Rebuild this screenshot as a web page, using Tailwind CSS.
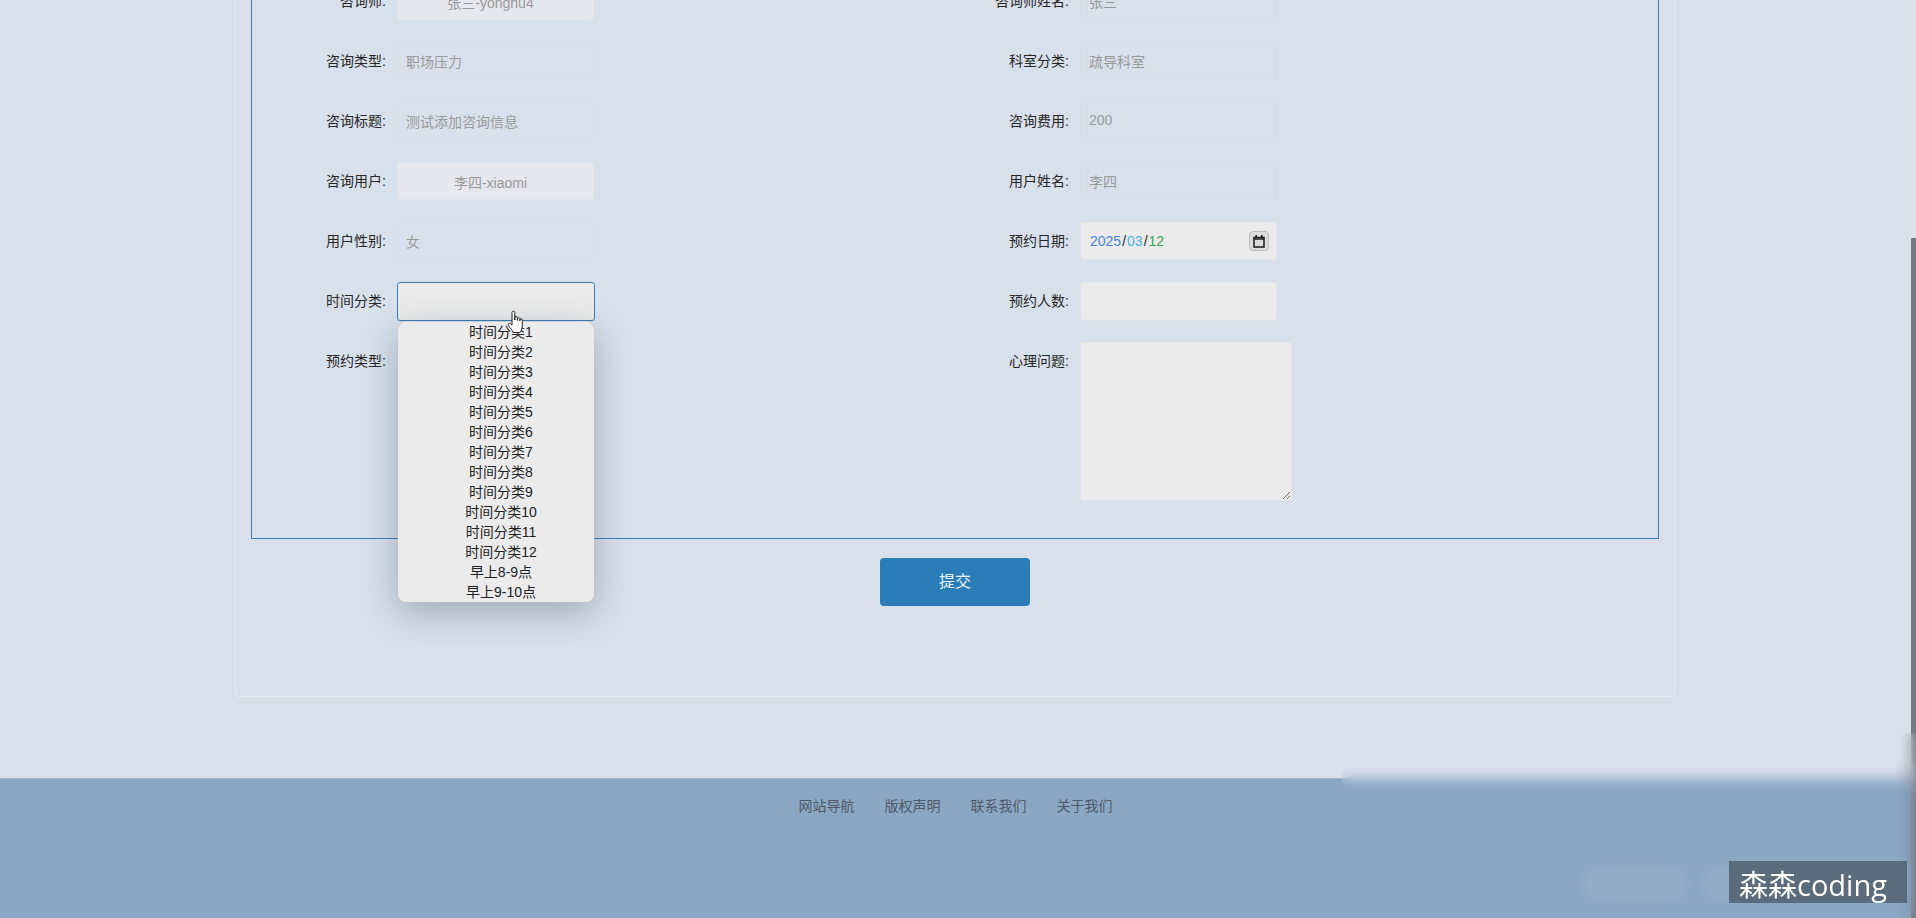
<!DOCTYPE html>
<html lang="zh-CN">

<head>
    <meta charset="UTF-8">
    <meta name="viewport" content="width=device-width, initial-scale=1.0">
    <title>预约</title>
    <script src="https://cdn.jsdelivr.net/npm/@tailwindcss/browser@4"></script>
</head>

<body class="bg-[#d9e0ec] font-['Liberation_Sans','Noto_Sans_CJK_SC',sans-serif] text-[14px] text-[#262626]">
    <div class="relative flex h-[918px] w-[1916px] overflow-hidden">
        <div class="flex h-full w-[1911px] flex-col">
            <!-- Main Content -->
            <main class="h-[778px] overflow-hidden pl-[235px]">
                <div class="-mt-[18px] h-[715px] w-[1440px] rounded-b-[4px] border-x border-b border-[#e6eaf1] px-[15px]">
                    <!-- Form box -->
                    <form class="grid h-[557px] w-[1408px] grid-cols-[683px_1fr] content-start gap-y-[22px] border-x border-b border-[#3a80b5] bg-[#d8e0eb]">
                        <div class="flex items-center gap-[11px]">
                            <label class="w-[134px] text-right">咨询师:</label>
                            <input readonly value="张三-yonghu4" class="h-[38px] w-[197px] rounded-[3px] border border-[#e0e4ea] bg-[#e6e8ed] pr-[10px] pt-px text-center text-[#999] outline-none">
                        </div>
                        <div class="flex items-center gap-[11px]">
                            <label class="w-[134px] text-right">咨询师姓名:</label>
                            <input readonly value="张三" class="h-[38px] w-[197px] rounded-[3px] border border-[#d3dce9] bg-[#d9e0ec] pl-[8px] text-[#999] outline-none">
                        </div>

                        <div class="flex items-center gap-[11px]">
                            <label class="w-[134px] text-right">咨询类型:</label>
                            <input readonly value="职场压力" class="h-[38px] w-[197px] rounded-[3px] border border-[#d3dce9] bg-[#d9e0ec] pl-[8px] text-[#999] outline-none">
                        </div>
                        <div class="flex items-center gap-[11px]">
                            <label class="w-[134px] text-right">科室分类:</label>
                            <input readonly value="疏导科室" class="h-[38px] w-[197px] rounded-[3px] border border-[#d3dce9] bg-[#d9e0ec] pl-[8px] text-[#999] outline-none">
                        </div>

                        <div class="flex items-center gap-[11px]">
                            <label class="w-[134px] text-right">咨询标题:</label>
                            <input readonly value="测试添加咨询信息" class="h-[38px] w-[197px] rounded-[3px] border border-[#d3dce9] bg-[#d9e0ec] pl-[8px] text-[#999] outline-none">
                        </div>
                        <div class="flex h-[38px] items-start gap-[11px]">
                            <label class="h-[38px] w-[134px] text-right leading-[38px]">咨询费用:</label>
                            <input readonly value="200" class="h-[36px] w-[197px] rounded-[3px] border border-[#d3dce9] bg-[#d9e0ec] pl-[8px] text-[#999] outline-none">
                        </div>

                        <div class="flex items-center gap-[11px]">
                            <label class="w-[134px] text-right">咨询用户:</label>
                            <input readonly value="李四-xiaomi" class="h-[38px] w-[197px] rounded-[3px] border border-[#e0e4ea] bg-[#e6e8ed] pr-[10px] pt-px text-center text-[#999] outline-none">
                        </div>
                        <div class="flex items-center gap-[11px]">
                            <label class="w-[134px] text-right">用户姓名:</label>
                            <input readonly value="李四" class="h-[38px] w-[197px] rounded-[3px] border border-[#d3dce9] bg-[#d9e0ec] pl-[8px] text-[#999] outline-none">
                        </div>

                        <div class="flex items-center gap-[11px]">
                            <label class="w-[134px] text-right">用户性别:</label>
                            <input readonly value="女" class="h-[38px] w-[197px] rounded-[3px] border border-[#d3dce9] bg-[#d9e0ec] pl-[8px] text-[#999] outline-none">
                        </div>
                        <div class="flex h-[38px] items-start gap-[11px]">
                            <label class="h-[38px] w-[134px] text-right leading-[38px]">预约日期:</label>
                            <div class="flex h-[38px] w-[197px] items-center justify-between rounded-[3px] border border-[#e0e4ea] bg-[#ebebeb] pl-[9px] pr-[7px]">
                                <span class="flex gap-px"><span class="text-[#4a86d8]">2025</span><span>/</span><span class="text-[#4fb0e0]">03</span><span>/</span><span class="text-[#38a848]">12</span></span>
                                <span class="flex h-[20px] w-[20px] items-center justify-center rounded-[4px] border border-[#bdbdbd] bg-[#dcdcdc]">
                                    <svg width="12" height="13" viewBox="0 0 12 13" fill="none" stroke="#222" stroke-width="1.6">
                                        <rect x="1" y="2.5" width="10" height="9.5"></rect>
                                        <path d="M1 4h10M3.2 0v2.5M8.8 0v2.5"></path>
                                    </svg>
                                </span>
                            </div>
                        </div>

                        <div class="flex items-center gap-[11px]">
                            <label class="w-[134px] text-right">时间分类:</label>
                            <div class="relative">
                                <input class="block h-[39px] w-[198px] rounded-[3px] border border-[#3a80b5] bg-[#ebebeb] outline-none">
                                <!-- Select dropdown -->
                                <ul class="absolute left-px top-[40px] z-10 h-[280px] w-[196px] overflow-hidden rounded-[8px] bg-[#ebebeb] pl-[10px] text-center leading-[20px] text-[#222] shadow-[0_10px_36px_rgba(40,50,70,0.32)]">
                                    <li>时间分类1</li>
                                    <li>时间分类2</li>
                                    <li>时间分类3</li>
                                    <li>时间分类4</li>
                                    <li>时间分类5</li>
                                    <li>时间分类6</li>
                                    <li>时间分类7</li>
                                    <li>时间分类8</li>
                                    <li>时间分类9</li>
                                    <li>时间分类10</li>
                                    <li>时间分类11</li>
                                    <li>时间分类12</li>
                                    <li>早上8-9点</li>
                                    <li>早上9-10点</li>
                                </ul>
                                <!-- Mouse pointer -->
                                <svg class="absolute left-[110px] top-[28px] z-20" width="17" height="24" viewBox="0 0 17 24" fill="#fff" stroke="#222" stroke-width="1">
                                    <path d="M5 12V2.500a1.400 1.400 0 0 1 2.800 0V10l0-2.200a1.300 1.300 0 0 1 2.600 0V10.500l0-1.800a1.300 1.300 0 0 1 2.500 0v2.100l0-.8a1.200 1.200 0 0 1 2.400 0V16c0 3-1.500 5-2.500 6.500H6.500C5.500 20.500 3.500 18.500 1.500 15.500c-1-1.500.5-3 2-1.800L5 15z"></path>
                                </svg>
                            </div>
                        </div>
                        <div class="flex items-center gap-[11px]">
                            <label class="w-[134px] text-right">预约人数:</label>
                            <input class="h-[39px] w-[197px] rounded-[3px] border border-[#e0e4ea] bg-[#ebebeb] outline-none">
                        </div>

                        <div class="-mt-px flex items-start gap-[11px]">
                            <label class="h-[38px] w-[134px] text-right leading-[38px]">预约类型:</label>
                        </div>
                        <div class="-mt-px flex items-start gap-[11px]">
                            <label class="h-[38px] w-[134px] text-right leading-[38px]">心理问题:</label>
                            <textarea class="block h-[159px] w-[212px] rounded-[3px] border border-[#e0e4ea] bg-[#ebebeb] outline-none"></textarea>
                        </div>
                    </form>

                    <div class="mt-[19px] flex justify-center">
                        <button type="button" class="h-[48px] w-[150px] rounded-[4px] bg-[#2a7db6] text-[16px] text-[#e8f2fa]">提交</button>
                    </div>
                </div>
            </main>

            <!-- Footer -->
            <footer class="h-[140px] border-t border-[#a3b4cc] bg-[#8aa7c4] pt-[17px]">
                <div class="flex justify-center gap-[30px] text-[#4f5a66]">
                    <a>网站导航</a>
                    <a>版权声明</a>
                    <a>联系我们</a>
                    <a>关于我们</a>
                </div>
            </footer>
        </div>

        <!-- Scrollbar -->
        <div class="h-full w-[5px] bg-[#e0e2ea] pt-[238px]">
            <div class="h-[680px] bg-[#77787f]"></div>
        </div>

        <!-- Blurred edge of the recording -->
        <div class="absolute left-[1342px] top-[762px] h-[34px] w-[574px] backdrop-blur-[6px]"></div>
        <div class="absolute left-[1896px] top-[733px] h-[185px] w-[20px] backdrop-blur-[6px]"></div>
        <div class="absolute left-[1583px] top-[866px] h-[36px] w-[105px] rounded-full bg-white/8 blur-[6px]"></div>
        <div class="absolute left-[1702px] top-[866px] h-[36px] w-[40px] rounded-full bg-white/8 blur-[6px]"></div>

        <!-- Watermark -->
        <div class="absolute left-[1729px] top-[861px] h-[42px] w-[178px] whitespace-nowrap bg-[#5a6b7c] pl-[10px] font-['Open_Sans','Noto_Sans_CJK_SC',sans-serif] text-[29px] leading-[48px] text-white">森森coding</div>
    </div>
</body>

</html>
